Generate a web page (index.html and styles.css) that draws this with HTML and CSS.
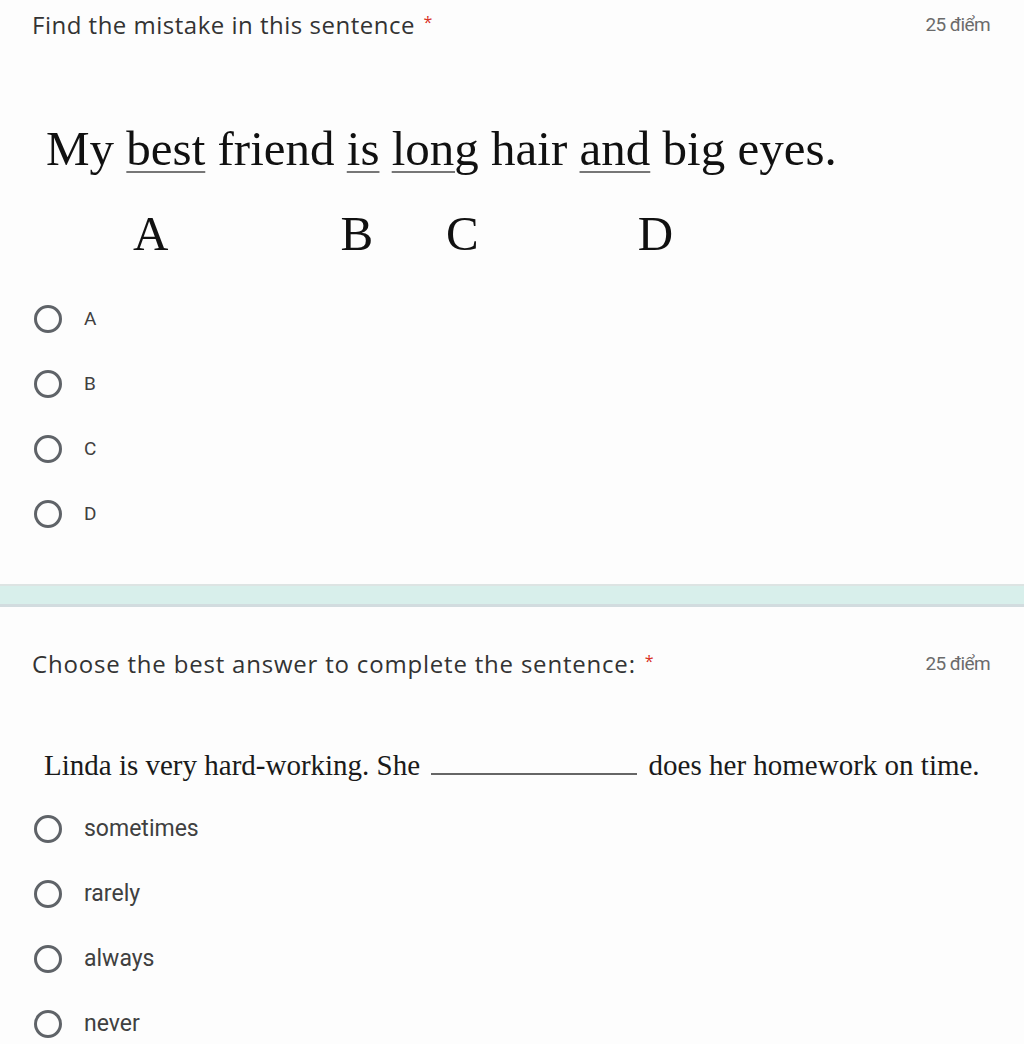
FILE: index.html
```html
<!DOCTYPE html>
<html>
<head>
<meta charset="utf-8">
<link rel="stylesheet" href="styles.css">
</head>
<body>
<section class="question q1">
  <div class="qhead">
    <div class="qtitle">Find the mistake in this sentence <span class="req">*</span></div>
    <div class="points">25 điểm</div>
  </div>
  <div class="figure">
    <div class="bigsent">My <u>best</u> friend <u>is</u> <u>long</u> hair <u>and</u> big eyes.</div>
    <div class="letters"><span class="la">A</span><span class="lb">B</span><span class="lc">C</span><span class="ld">D</span></div>
  </div>
  <ul class="options opts1">
    <li><span class="radio"></span><span class="olabel">A</span></li>
    <li><span class="radio"></span><span class="olabel">B</span></li>
    <li><span class="radio"></span><span class="olabel">C</span></li>
    <li><span class="radio"></span><span class="olabel">D</span></li>
  </ul>
</section>
<div class="divider"></div>
<section class="question q2">
  <div class="qhead">
    <div class="qtitle">Choose the best answer to complete the sentence: <span class="req">*</span></div>
    <div class="points">25 điểm</div>
  </div>
  <div class="sent2">Linda is very hard-working. She <span class="blank"></span> does her homework on time.</div>
  <ul class="options opts2">
    <li><span class="radio"></span><span class="olabel">sometimes</span></li>
    <li><span class="radio"></span><span class="olabel">rarely</span></li>
    <li><span class="radio"></span><span class="olabel">always</span></li>
    <li><span class="radio"></span><span class="olabel">never</span></li>
  </ul>
</section>
</body>
</html>
```
FILE: styles.css
```css
html, body {
  margin: 0;
  padding: 0;
  background: #fdfdfd;
}
body {
  width: 1024px;
  height: 1044px;
  overflow: hidden;
  font-family: "Open Sans", "Liberation Sans", sans-serif;
  color: #202124;
}
.question {
  padding: 0 34px 0 32px;
}
.qhead {
  display: flex;
  justify-content: space-between;
  align-items: center;
}
.q1 .qhead {
  padding-top: 8px;
  height: 32px;
}
.qtitle {
  font-size: 24px;
  color: #333;
  letter-spacing: 0.5px;
}
.q2 .qtitle {
  letter-spacing: 0.8px;
}
.req {
  color: #d93025;
  font-size: 16px;
  vertical-align: 6px;
  margin-left: 2px;
}
.points {
  font-family: Roboto, "Liberation Sans", sans-serif;
  font-size: 19px;
  color: #6b6b6b;
  letter-spacing: -0.6px;
}
.figure {
  font-family: "Liberation Serif", "Times New Roman", serif;
  color: #111;
  padding-left: 14px;
}
.bigsent {
  margin-top: 81px;
  font-size: 49px;
  line-height: 56px;
}
.bigsent u {
  text-decoration-color: #777;
  text-decoration-thickness: 2px;
  text-underline-offset: 6px;
}
.letters {
  display: flex;
  font-size: 49px;
  line-height: 56px;
  margin-top: 29px;
}
.la { margin-left: 87px; }
.lb { margin-left: 172px; }
.lc { margin-left: 73px; }
.ld { margin-left: 159px; }
.options {
  list-style: none;
  margin: 0;
  padding: 0;
}
.options li {
  display: flex;
  align-items: center;
  height: 65px;
}
.radio {
  box-sizing: border-box;
  width: 28px;
  height: 28px;
  border: 3px solid #5f6368;
  border-radius: 50%;
  margin-left: 2px;
  flex: none;
}
.olabel {
  font-family: Roboto, "Liberation Sans", sans-serif;
  font-size: 23px;
  color: #404040;
  margin-left: 22px;
}
.opts1 {
  margin-top: 24px;
}
.opts1 .olabel {
  font-size: 19px;
}
.divider {
  margin-top: 38px;
  height: 18px;
  background: #d8efeb;
  border-top: 2px solid #dde4e3;
  border-bottom: 3px solid #d2dcdf;
}
.q2 .qhead {
  margin-top: 40px;
  height: 32px;
}
.sent2 {
  font-family: "Liberation Serif", "Times New Roman", serif;
  font-size: 29px;
  color: #1a1a1a;
  margin-top: 66px;
  margin-left: 12px;
  line-height: 40px;
}
.blank {
  display: inline-block;
  width: 206px;
  border-bottom: 2px solid #666;
  margin: 0 4px;
}
.opts2 {
  margin-top: 11px;
}
```
